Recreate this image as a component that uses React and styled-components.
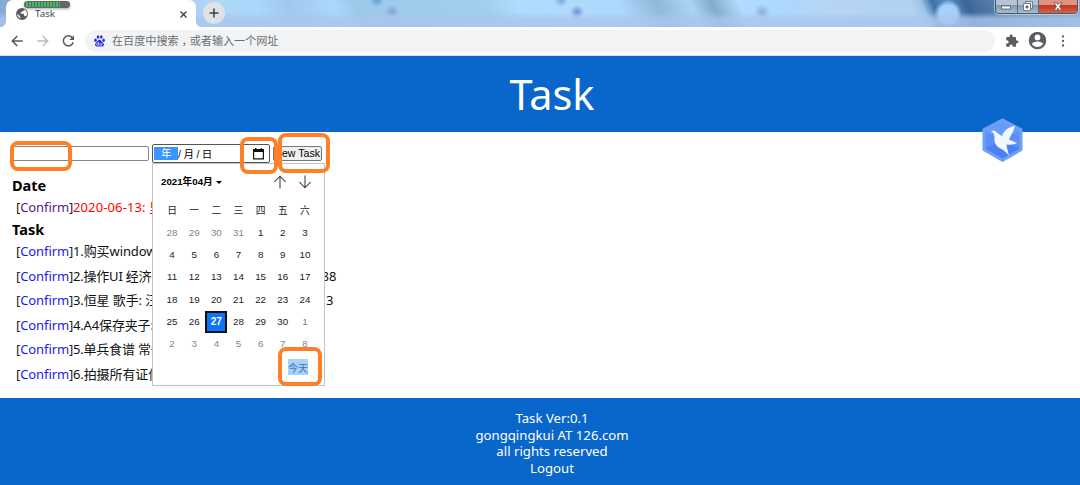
import React from "react";
import styled, { createGlobalStyle, css } from "styled-components";

const Global = createGlobalStyle`
  * { box-sizing: border-box; }
  body { margin: 0; background: #fff; overflow: hidden; }
`;

const ui = `"Noto Sans", "Noto Sans CJK SC", sans-serif`;
const arial = `"Liberation Sans", "Noto Sans CJK SC", sans-serif`;

const Page = styled.div`
  position: relative;
  width: 1080px;
  height: 485px;
  display: flex;
  flex-direction: column;
  overflow: hidden;
  font-family: ${ui};
  color: #000;
`;

/* ---------- browser frame ---------- */
const TabStrip = styled.div`
  position: relative;
  height: 27px;
  flex: none;
  display: flex;
  align-items: flex-start;
  padding-left: 6px;
  overflow: hidden;
  background:
    linear-gradient(180deg, transparent 12px, rgba(170, 197, 238, 0.8) 19px),
    radial-gradient(circle at 377px 0px, #6aa0d8 1px, transparent 7px),
    radial-gradient(circle at 392px 12px, #86a9d4 1px, transparent 7px),
    radial-gradient(circle at 561px 0px, #80aedc 1px, transparent 7px),
    radial-gradient(circle at 577px 12px, #7c96d8 1px, transparent 7px),
    radial-gradient(circle at 762px 12px, #8fb3dc 1px, transparent 8px),
    radial-gradient(circle at 948px 14px, #a4d1fb 9px, transparent 14px),
    linear-gradient(65deg, #86a7cf 0, #b0d6f7 200px, #a9d8fb 240px, #a1c9ed 270px, #a9d8fb 312px,
      #9bc9ea 330px, #a2cfef 450px, #b0dcff 480px, #acd9fc 570px, #8fb8d9 605px, #a9d5f5 635px,
      #83aac9 655px, #b0dcff 680px, #acd8fb 730px, #b7d5f3 760px, #b1d2f2 835px, #9fc4e8 845px,
      #3f74aa 855px, #5c92c7 870px, #3a6698 885px, #6287b0 920px, #88a9ce 990px);
`;

const Tab = styled.div`
  position: relative;
  width: 190px;
  height: 27px;
  display: flex;
  align-items: center;
  padding: 1px 8px 0 10px;
  background: #fff;
  border-radius: 7px 7px 0 0;
  &::before, &::after {
    content: "";
    position: absolute;
    bottom: 0;
    width: 5px;
    height: 5px;
  }
  &::before { left: -5px; background: radial-gradient(circle at 0 0, transparent 4.5px, #fff 5px); }
  &::after { right: -5px; background: radial-gradient(circle at 100% 0, transparent 4.5px, #fff 5px); }
`;

const TabTitle = styled.span`
  flex: 1;
  margin-left: 7px;
  font-size: 9.8px;
  line-height: 14px;
  color: #45484c;
`;

const Meter = styled.div`
  position: absolute;
  left: 18px;
  top: 1px;
  width: 46px;
  height: 7px;
  border-radius: 4px;
  padding: 1px 10px 1px 2px;
  background: #666;
  box-shadow: 0 1px 3px rgba(0, 0, 0, 0.35);
`;
const MeterFill = styled.div`
  height: 5px;
  background: repeating-linear-gradient(90deg, #3fb765 0 2px, #51705a 2px 3px);
`;

const NewTab = styled.div`
  width: 22px;
  height: 22px;
  margin: 2px 0 0 7px;
  border-radius: 50%;
  background: #dee1e6;
  display: grid;
  place-items: center;
`;

const WindowButtons = styled.div`
  position: absolute;
  right: 2px;
  top: -4px;
  height: 18px;
  width: 83px;
  display: flex;
  border: 1px solid #46586d;
  border-radius: 0 0 4px 4px;
  box-shadow: 0 0 0 1px rgba(255, 255, 255, 0.45);
  overflow: hidden;
`;
const WindowButton = styled.div`
  width: ${(p) => p.$w}px;
  height: 16px;
  display: grid;
  place-items: center;
  padding-top: ${(p) => p.$pt || 2}px;
  border-right: 1px solid ${(p) => (p.$close ? "transparent" : "#58697e")};
  background: ${(p) =>
    p.$close
      ? "linear-gradient(180deg, #dd9484 0 48%, #c5351c 50%, #d76447 100%)"
      : "linear-gradient(180deg, #b5c4d5 0 48%, #8297b0 50%, #a8bbcf 100%)"};
`;

const Toolbar = styled.div`
  height: 29px;
  flex: none;
  display: flex;
  align-items: center;
  padding: 0 10px 1px 11px;
  background: #fff;
  border-bottom: 1px solid #dadce0;
`;
const NavIcons = styled.div`
  display: flex;
  gap: 13.5px;
  width: 74px;
`;
const Address = styled.div`
  width: 910px;
  height: 22px;
  border-radius: 11px;
  background: #f1f3f4;
  display: flex;
  align-items: center;
  gap: 7px;
  padding-left: 9px;
  font-size: 11.1px;
  line-height: 20px;
  color: #6b6e72;
`;
const Comma = styled.span`
  margin: 0 -3px 0 3px;
`;
const ToolIcons = styled.div`
  display: flex;
  align-items: center;
  margin-left: 10px;
`;
const ProfileIcon = styled.svg`
  margin: 0 13px 0 8px;
`;

/* ---------- page content ---------- */
const Banner = styled.header`
  height: 76px;
  flex: none;
  display: flex;
  align-items: center;
  justify-content: center;
  padding: 0 0 1px 24px;
  background: #0966ca;
  color: #fff;
  font-size: 41.5px;
  line-height: 60px;
`;

const Main = styled.main`
  height: 266px;
  flex: none;
  padding: 12px 12px 0;
`;
const Form = styled.div`
  display: flex;
  align-items: center;
  height: 19px;
  margin-bottom: 11px;
`;
const TextField = styled.div`
  width: 137px;
  height: 15px;
  border: 1px solid #858585;
  border-radius: 2px;
  margin-right: 3px;
`;
const DateField = styled.div`
  position: relative;
  width: 118px;
  height: 19px;
  margin-right: 3px;
  display: flex;
  align-items: center;
  padding: 0 5px 0 1px;
  border: 1.5px solid #555;
  border-radius: 2px;
  font: 10.5px/14px ${arial};
`;
const YearPart = styled.span`
  width: 24px;
  height: 13px;
  padding-left: 7px;
  line-height: 12px;
  background: #3897fd;
  color: #fff;
`;
const DateRest = styled.span`
  flex: 1;
  letter-spacing: 2.5px;
  white-space: nowrap;
`;
const SubmitButton = styled.div`
  width: 49px;
  height: 15px;
  border: 1px solid #777;
  border-radius: 2px;
  background: #efefef;
  display: flex;
  justify-content: flex-end;
  padding-right: 1px;
  font: 10.6px/13px ${arial};
  white-space: nowrap;
`;

const Heading = styled.h2`
  margin: 0;
  height: 22px;
  font-size: 14.5px;
  line-height: 22px;
  font-weight: 700;
`;
const Items = styled.div`
  display: flex;
  flex-direction: column;
  margin-left: 4px;
`;
const Item = styled.div`
  display: flex;
  height: ${(p) => p.$h || 24.5}px;
  line-height: 23px;
  font-size: 13px;
  white-space: pre;
  color: ${(p) => (p.$due ? "#f00" : "#111")};
`;
const Action = styled.span`
  width: 57px;
  color: #222;
  letter-spacing: -0.08px;
  a { color: ${(p) => (p.$visited ? "#551a8b" : "#1a1aee")}; }
`;
const Label = styled.span`
  width: ${(p) => (p.$tail ? p.$tail : 140)}px;
  letter-spacing: ${(p) => p.$ls ?? -0.1}px;
`;

/* ---------- calendar popup ---------- */
const Popup = styled.div`
  position: absolute;
  left: -1px;
  top: 18px;
  z-index: 2;
  width: 173px;
  height: 223px;
  background: #fff;
  border: 1px solid #c3c3c3;
  padding: 8px 8px 0 8px;
  font: 9.8px/12px ${arial};
  color: #222;
`;
const MonthBar = styled.div`
  display: flex;
  align-items: center;
  height: 20px;
`;
const Month = styled.span`
  font-weight: 700;
  font-size: 9.7px;
  color: #000;
  margin-right: 3px;
`;
const Caret = styled.span`
  border: 3px solid transparent;
  border-top-color: #000;
  border-bottom: 0;
  flex: none;
`;
const Arrows = styled.div`
  margin-left: auto;
  margin-right: 4px;
  display: flex;
  gap: 11px;
`;
const Grid = styled.div`
  display: grid;
  grid-template-columns: repeat(7, 22.15px);
  grid-auto-rows: 22.15px;
  margin: 8px 0 0 0;
`;
const Day = styled.span`
  display: grid;
  place-items: center;
  color: ${(p) => (p.$dim ? "#858585" : "#222")};
  ${(p) =>
    p.$next &&
    css`
      color: #5c7f9e;
    `}
  ${(p) =>
    p.$sel &&
    css`
      background: #0a75ff;
      border: 2px solid #111;
      color: #fff;
      font-weight: 700;
      font-size: 10px;
    `}
`;
const TodayRow = styled.div`
  display: flex;
  justify-content: flex-end;
  margin: 4px 8px 0 0;
`;
const Today = styled.span`
  width: 20px;
  height: 16px;
  background: #abd0fb;
  color: #3279bd;
  font-size: 10px;
  line-height: 20px;
  text-align: center;
  white-space: nowrap;
`;

const Footer = styled.footer`
  height: 87px;
  flex: none;
  padding: 12px 0 0 24px;
  background: #0966ca;
  color: #fff;
  text-align: center;
  font-size: 13.2px;
  line-height: 16.6px;
`;

const Mark = styled.div`
  position: absolute;
  z-index: 4;
  left: ${(p) => p.$x}px;
  top: ${(p) => p.$y}px;
  width: ${(p) => p.$w}px;
  height: ${(p) => p.$h}px;
  border: 4px solid #ff7f27;
  border-radius: 8px;
`;
const Floating = styled.svg`
  position: absolute;
  left: 980px;
  top: 116px;
`;

const weekdays = ["日", "一", "二", "三", "四", "五", "六"];
const days = [28, 29, 30, 31, ...Array.from({ length: 30 }, (_, i) => i + 1), 1, 2, 3, 4, 5, 6, 7, 8];

const tasks = [
  { text: "1.购买windows" },
  { text: "2.操作UI 经济全", tail: "88", at: 248.5, ls: -0.2 },
  { text: "3.恒星 歌手: 汪", tail: "3", at: 253 },
  { text: "4.A4保存夹子:", ls: -0.15 },
  { text: "5.单兵食谱 常备", ls: -0.2 },
  { text: "6.拍摄所有证件" },
];
const marks = [
  [10, 141, 62, 30],
  [240, 137, 38, 37],
  [278, 133, 52, 40],
  [278, 347, 44, 39],
];

const Back = ({ dim }) => (
  <svg width="12" height="12" viewBox="0 0 12 12" fill="none" stroke={dim ? "#babcbe" : "#56595d"} strokeWidth="1.5"
    transform={dim ? "scale(-1 1)" : undefined}>
    <path d="M11.7 6H1.5M6.3 1L1.3 6l5 5" />
  </svg>
);

const Arrow = ({ down }) => (
  <svg width="14" height="14" viewBox="0 0 14 14" fill="none" stroke="#444" strokeWidth="1.1"
    transform={down ? "scale(1 -1)" : undefined}>
    <path d="M7 13.5V1.2M1.5 6.8L7 1.2l5.5 5.6" />
  </svg>
);

function Browser() {
  return (
    <>
      <TabStrip>
        <Tab>
          <svg width="12" height="12" viewBox="0 0 24 24" fill="#55595e">
            <path d="M12 0a12 12 0 1 0 0 24 12 12 0 0 0 0-24zM10 21C5 20 2.500 16 2.500 11l5 5v2l2.500 1.500zM19.500 17c-.5-1-1.500-1.500-2.500-1.500h-1v-3.500l-7-1V8.500h3V6h3l2-3c3.500 2 5 5 5 9 0 2-.9 4-2.500 5z" />
          </svg>
          <TabTitle>Task</TabTitle>
          <svg width="9" height="9" viewBox="0 0 9 9" stroke="#3c4043" strokeWidth="1.4"><path d="M1.500 1.500l6 6M7.500 1.500l-6 6" /></svg>
          <Meter><MeterFill /></Meter>
        </Tab>
        <NewTab>
          <svg width="10" height="10" viewBox="0 0 10 10" stroke="#3c4043" strokeWidth="1.500"><path d="M5 .5v9M.5 5h9" /></svg>
        </NewTab>
        <WindowButtons>
          <WindowButton $w={22} $pt={5}>
            <svg width="10" height="5" viewBox="0 0 10 5"><rect x=".5" y="1" width="9" height="3" fill="#fff" stroke="#4d5968" strokeWidth=".8" /></svg>
          </WindowButton>
          <WindowButton $w={22}>
            <svg width="10" height="10" viewBox="0 0 10 10" stroke="#4d5968" strokeWidth=".7">
              <path d="M2.500.5h7v7h-2v-5h-5z" fill="#dfe6ee" />
              <path d="M.5 2.500h7v7h-7z" fill="#fff" /><path d="M3 5h2v2H3z" fill="#63758b" />
            </svg>
          </WindowButton>
          <WindowButton $w={38} $close>
            <svg width="10" height="9" viewBox="0 0 10 9">
              <path d="M1 .7h2.500L5 2.700 6.500.7H9L6.500 4.500 9 8.300H6.500L5 6.300 3.500 8.300H1L3.500 4.500z" fill="#fff" stroke="#5e4a51" strokeWidth=".8" />
            </svg>
          </WindowButton>
        </WindowButtons>
      </TabStrip>
      <Toolbar>
        <NavIcons>
          <Back />
          <Back dim />
          <svg width="13" height="12" viewBox="0 0 13 12" fill="none" stroke="#56595d" strokeWidth="1.500">
            <path d="M10.500 3A5 5 0 1 0 11.200 7.200" /><path d="M12 .3v4.600H7.400z" fill="#56595d" stroke="none" />
          </svg>
        </NavIcons>
        <Address>
          <svg width="11" height="12" viewBox="0 0 22 24" fill="#2932e1">
            <ellipse cx="3" cy="10.500" rx="2.600" ry="3.300" /><ellipse cx="8" cy="4" rx="2.600" ry="3.500" />
            <ellipse cx="14.500" cy="4" rx="2.600" ry="3.500" /><ellipse cx="19.300" cy="10.500" rx="2.500" ry="3.300" />
            <path d="M11 9.500c3 0 4 3 6 5s3.500 4 2.500 6.500c-1.500 3.500-5 1.500-8.500 1.500S4 24.500 2.500 21C1.500 18.500 3 16.500 5 14.500s3-5 6-5z" />
            <path d="M9 14v6.500H7a1.700 1.700 0 0 1 0-3.800h2M12.300 16v3.500q0 1 1 1h2.200V16" fill="none" stroke="#fff" strokeWidth="1.300" />
          </svg>
          <span>在百度中搜索<Comma>，</Comma>或者输入一个网址</span>
        </Address>
        <ToolIcons>
          <svg width="14" height="14" viewBox="0 0 24 24" fill="#5a5e63">
            <path d="M20.500 11H19V7a2 2 0 0 0-2-2h-4V3.500a2.500 2.500 0 0 0-5 0V5H4a2 2 0 0 0-2 2v3.800h1.500a2.700 2.700 0 0 1 0 5.400H2V20c0 1.100.9 2 2 2h3.800v-1.500a2.700 2.700 0 0 1 5.400 0V22H17a2 2 0 0 0 2-2v-4h1.500a2.500 2.500 0 0 0 0-5z" />
          </svg>
          <ProfileIcon width="21" height="21" viewBox="0 0 24 24" fill="#5a5e63">
            <path d="M12 2a10 10 0 1 0 0 20 10 10 0 0 0 0-20zm0 3.200a3.300 3.300 0 1 1 0 6.600 3.300 3.300 0 0 1 0-6.600zm0 14.300c-2.700 0-5-1.300-6.300-3.400.1-2 4.200-3.100 6.300-3.100s6.200 1.100 6.300 3.100A7.500 7.500 0 0 1 12 19.500z" />
          </ProfileIcon>
          <svg width="4" height="12" viewBox="0 0 4 12" fill="#5a5e63">
            <circle cx="2" cy="1.500" r="1.150" /><circle cx="2" cy="6" r="1.150" /><circle cx="2" cy="10.500" r="1.150" />
          </svg>
        </ToolIcons>
      </Toolbar>
    </>
  );
}

function Calendar() {
  return (
    <Popup>
      <MonthBar>
        <Month>2021年04月</Month>
        <Caret />
        <Arrows><Arrow /><Arrow down /></Arrows>
      </MonthBar>
      <Grid>
        {weekdays.map((d) => <Day key={d}>{d}</Day>)}
        {days.map((d, i) => (
          <Day key={i} $dim={i < 4 || i > 34} $next={i === 34} $sel={i === 30}>{d}</Day>
        ))}
      </Grid>
      <TodayRow><Today>今天</Today></TodayRow>
    </Popup>
  );
}

export default function App() {
  return (
    <Page>
      <Global />
      <Browser />
      <Banner>Task</Banner>
      <Main>
        <Form>
          <TextField />
          <DateField>
            <YearPart>年</YearPart>
            <DateRest>/月/日</DateRest>
            <svg width="11" height="12" viewBox="0 0 11 12" fill="#111">
              <path d="M0 1h2V0h1.300v1h4.400V0H9v1h2v10.500H0zM1.200 4v6.300h8.600V4z" fillRule="evenodd" />
            </svg>
            <Calendar />
          </DateField>
          <SubmitButton>New Task</SubmitButton>
        </Form>
        <Heading>Date</Heading>
        <Items>
          <Item $due $h={22}>
            <Action $visited>[<a>Confirm</a>]</Action>
            <Label $ls={0.12}>2020-06-13: 里</Label>
          </Item>
        </Items>
        <Heading>Task</Heading>
        <Items>
          {tasks.map((t) => (
            <Item key={t.text}>
              <Action>[<a>Confirm</a>]</Action>
              <Label $tail={t.at} $ls={t.ls}>{t.text}</Label>
              {t.tail && <span>{t.tail}</span>}
            </Item>
          ))}
        </Items>
      </Main>
      <Footer>
        <div>Task Ver:0.1</div>
        <div>gongqingkui AT 126.com</div>
        <div>all rights reserved</div>
        <div>Logout</div>
      </Footer>
      {marks.map(([x, y, w, h]) => <Mark key={x + y} $x={x} $y={y} $w={w} $h={h} />)}
      <Floating width="44" height="48" viewBox="0 0 44 48">
        <path d="M22.500 3.500L41.500 13.500V34L22.500 45 3.500 34V13.500z" fill="#6fa0f8" stroke="#6fa0f8" strokeWidth="2" strokeLinejoin="round" />
        <path d="M22.500 6L39.500 15v17.500L22.500 42.500 5.500 32.500V15z" fill="#5b90f7" />
        <path d="M5.500 32.500L22.500 24l17 8.500-17 10z" fill="#4a80f3" />
        <path d="M22.500 6L39.500 15l-17 9-17-9z" fill="#6c9bf7" />
        <path d="M11 15.200c2.500-.8 4.500-.5 6 1.500l5 3.500C24 14 28 12 35 9.500c-1 4.500-2.500 7-4.500 10.500L29 23.500l8 3.500c-3 1.500-6 2-10.500 1.500.5 4 1.500 7 2.500 11.500-3-4.500-6-6.500-9.500-8-4-2.500-5.500-6-5-10.500 0-3-1-5-3.500-6.300z" fill="#f3f7ff" />
      </Floating>
    </Page>
  );
}
